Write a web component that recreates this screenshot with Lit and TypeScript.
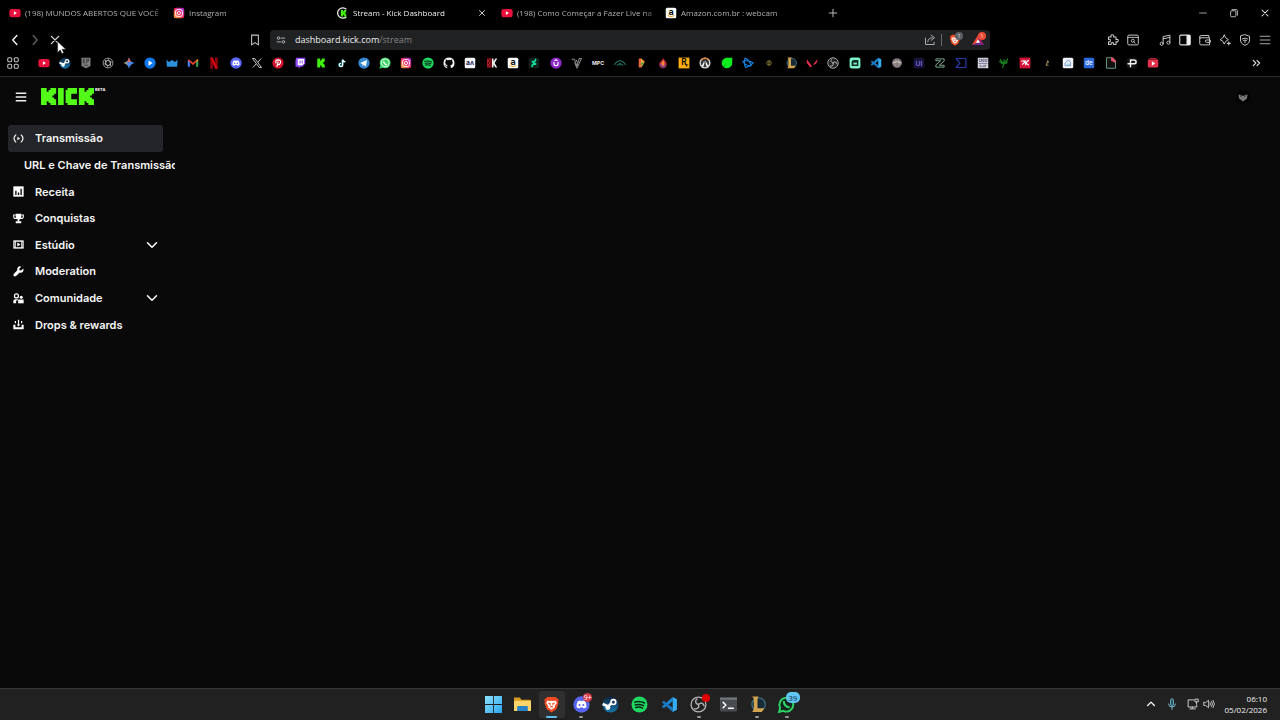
import { LitElement, html, svg, css, nothing } from "lit";
import { customElement, property } from "lit/decorators.js";

const badge = (bg: string, inner: unknown) => svg`<rect x="1" y="1" width="14" height="14" rx="2" fill=${bg}/>${inner}`;
const line = (d: string, color = "#c8c8c8", w = 1.3) =>
  svg`<path d=${d} fill="none" stroke=${color} stroke-width=${w} stroke-linecap="round" stroke-linejoin="round"/>`;
const fill = (d: string, color: string) => svg`<path d=${d} fill=${color}/>`;
const glyph = (t: string, color: string, size: number, y = 11) =>
  svg`<text x="8" y=${y} text-anchor="middle" font-size=${size} font-weight="700" font-family="Inter, sans-serif" fill=${color}>${t}</text>`;

const KICK_K = "M3 2h4v3h1v-1h1v-2h4v4h-1v1h-1v2h1v1h1v4h-4v-2h-1v-1h-1v3h-4z";
const DISCORD = "M3.6 4.6Q5.5 3.4 6.6 3.4l.5.8h1.8l.5-.8q1.100 0 3 1.200 1.700 3.200 1.300 6.500-1.500 1.200-3.200 1.500l-.8-1.300H6.300l-.8 1.300q-1.700-.3-3.200-1.500Q2 7.800 3.600 4.600z";

const ICONS: Record<string, unknown> = {
  youtube: svg`<rect x="0.500" y="2.500" width="15" height="11" rx="3" fill="#e8103c"/><path d="M6.500 5.500v5l4-2.500z" fill="#fff"/>`,
  steam: svg`<defs><linearGradient id="st" x2="0" y2="1"><stop offset="0" stop-color="#10233c"/><stop offset="1" stop-color="#1576ac"/></linearGradient></defs><circle cx="8" cy="8" r="7.500" fill="url(#st)"/><path d="M.6 7.500 6 9.800 8.600 7" stroke="#fff" stroke-width="2.400" fill="none"/><circle cx="10.700" cy="5.700" r="3" fill="#fff"/><circle cx="10.700" cy="5.700" r="1.500" fill="#29445f"/><circle cx="5.500" cy="10.800" r="2.300" fill="#fff"/>`,
  epic: svg`<path d="M2 1h12v11l-6 3-6-3z" fill="#808080"/><path d="M4.500 3h2.500M4.500 5.500h2M4.500 8h2.500M4.500 3v5M9 8.500V3h2.500v2.500H9M5 11h6" stroke="#2c2c2c" fill="none"/>`,
  gpt: svg`<g fill="none" stroke="#b8b8b8" stroke-width="1.100"><circle cx="8" cy="8" r="6.500"/><path d="M8 4.500 11 6.200v3.600L8 11.500 5 9.800V6.200zM8 4.500 13 7M11 6.200 11.500 12M11 9.800 6.500 13M8 11.500 3 9M5 9.800 4.500 4M5 6.200 9.500 3"/></g>`,
  gemini: svg`<defs><linearGradient id="gm" x2="1"><stop offset="0" stop-color="#e8c24a"/><stop offset=".45" stop-color="#4b86e8"/><stop offset="1" stop-color="#4b86e8"/></linearGradient></defs><path d="M8 0.500Q9.500 6.500 15.500 8 9.500 9.500 8 15.500 6.500 9.500 .5 8 6.500 6.500 8 .5z" fill="url(#gm)"/><path d="M8 .5Q9 5 11 6.500H5Q7 5 8 .5" fill="#e0665c"/>`,
  play: svg`<circle cx="8" cy="8" r="7.500" fill="#1078ec"/><path d="M6 4.500v7l5.500-3.500z" fill="#fff"/>`,
  crown: fill("M.5 3.500 4 6.500 8 4l4 2.500 3.500-3-.7 9.500H1.200z", "#2b8fdc"),
  gmail: svg`<path d="M1 13V4.500h2.800V13z" fill="#4285f4"/><path d="M12.200 13V4.500H15V13z" fill="#34a853"/><path d="M1 4.500 2.500 3 8 7.500 13.500 3 15 4.500 8 10.500z" fill="#ea4335"/><path d="m12.200 6.500 2.800-2-1-2z" fill="#fbbc04"/>`,
  netflix: svg`<path d="M3 .5h3.500v15H3zM9.500 .5H13v15H9.500z" fill="#8f050c"/><path d="M3 .5h3.500l6.500 15H9.500z" fill="#d40812"/>`,
  discord: svg`<circle cx="8" cy="8" r="7.700" fill="#5865f2"/><g transform="translate(1.400 1.500) scale(.82)">${fill(DISCORD, "#fff")}<circle cx="5.800" cy="8.500" r="1.200" fill="#5865f2"/><circle cx="10.200" cy="8.500" r="1.200" fill="#5865f2"/></g>`,
  x: svg`<path d="M2 2h3l9 12h-3zM13.500 2 9 7.200M7 9 2.500 14" fill="none" stroke="#d8d8d8" stroke-width="1.200"/>`,
  pinterest: svg`<circle cx="8" cy="8" r="7.500" fill="#d3122e"/><path d="M5.500 8.500Q3.800 4 8 3.800q4 .2 3.300 3.800-1 3.500-3.500 2M8.300 6 6.500 13" fill="none" stroke="#fff" stroke-width="1.600"/>`,
  twitch: svg`<path d="M3 1h12v8l-4 4H8.500L6 15.500V13H2V4z" fill="#9146ff"/><path d="M5 2.500h8.500v6L11 11H5z" fill="#fff"/><path d="M8 4.500v4M11 4.500v4" stroke="#9146ff" stroke-width="1.400"/>`,
  kick: fill(KICK_K, "#3ff00e"),
  tiktok: svg`<path d="M8.500 3.500v7a2.200 2.200 0 1 1-2.200-2.200M8.500 3.500q.5 2.500 3.500 3" fill="none" stroke="#35d7dc" stroke-width="2.200"/><path d="M9 3.500v7a2.200 2.200 0 1 1-2.200-2.200M9 3.500q.5 2.500 3.500 3" fill="none" stroke="#fff" stroke-width="1.600"/>`,
  telegram: svg`<circle cx="8" cy="8" r="7.500" fill="#3488d4"/><path d="m3 8 9-4-1.500 8.500-3-2-1.500 1.500V9.500z" fill="#fff"/>`,
  whatsapp: svg`<circle cx="8.200" cy="7.800" r="7.300" fill="#35d366"/><path d="m.5 15.500 1.300-5 3.400 3.700z" fill="#35d366"/><circle cx="8.200" cy="7.800" r="5.300" fill="none" stroke="#e4ffe9" stroke-width="1.300"/><path d="M6 5.500q.5 4 4.500 5" stroke="#e4ffe9" stroke-width="1.800" fill="none"/>`,
  instagram: svg`<defs><linearGradient id="ig" x1="0" y1="1" x2="1" y2="0"><stop offset="0" stop-color="#ffb52e"/><stop offset=".5" stop-color="#ee2a63"/><stop offset="1" stop-color="#9a2be0"/></linearGradient></defs><rect x="1" y="1" width="14" height="14" rx="3" fill="url(#ig)"/><rect x="3.500" y="3.500" width="9" height="9" rx="2.600" fill="none" stroke="#fff" stroke-width="1.300"/><circle cx="8" cy="8" r="2.100" fill="none" stroke="#fff" stroke-width="1.200"/>`,
  spotify: svg`<circle cx="8" cy="8" r="7.500" fill="#1ed760"/><path d="M3.500 5.800q5-1.500 9.200.8M4 8.400q4.300-1.200 7.800.7M4.500 10.800q3.700-1 6.400.6" fill="none" stroke="#0b2412" stroke-width="1.400" stroke-linecap="round"/>`,
  github: fill("M8 .7a7.400 7.400 0 0 0-2.400 14.400V12.800q-2 .5-2.600-1-.4-.8-1-1.200 1-.3 1.600.7.800 1.100 2.100.6 0-.6.500-1Q3 10.600 3 7.500q0-1.200.8-2-.3-1 .1-2.100 1 0 2.200.9 1.900-.5 3.800 0 1.200-.9 2.200-.9.4 1.100.1 2.100.8.800.8 2 0 3.100-3.200 3.500.6.500.6 1.500v2.600A7.400 7.400 0 0 0 8 .7z", "#f0f0f0"),
  an: badge("#f4f4fa", svg`${glyph("aʌ", "#252c5c", 9)}`),
  redk: svg`<path d="M1.500 2h6v12h-6z" fill="#c01828"/><path d="M3 3l4 5-4 5M7 3 3 8l4 5" stroke="#2a0608" fill="none"/><path d="M8 2h2v4l2.500-4H15l-3.500 6 3.500 6h-2.500L10 10v4H8z" fill="#eee"/>`,
  amazon: badge("#fff", svg`${glyph("a", "#111", 12, 10)}<path d="M3.500 11.500q4.500 2.500 9 0" stroke="#f2a01c" stroke-width="1.300" fill="none"/>`),
  deviant: badge("#12211d", fill("M11 2v3L8.800 8H11v2.500H7.500L6 13.500H4.500v-3L7 7.500H5V5h3.200L9.800 2z", "#12dc9a")),
  udemy: svg`<circle cx="8" cy="8" r="7.500" fill="#8c28c8"/><path d="M5.300 6.500V9q0 2.600 2.700 2.600T10.700 9V6.500M6 5l2-1.500L10 5" fill="none" stroke="#fff" stroke-width="1.500"/>`,
  vee: line("M1.500 3h3L8 12l3-10h3L8 15 5 8M7 4l1.500 3", "#c0c0c0", 1),
  mpc: glyph("MPC", "#e8e8e8", 7, 10.5),
  eye: line("M1 10Q4 5 8 5t7 5M4 11q4-4 8 0M8 8v3", "#287a68", 1.4),
  flag: svg`<path d="M5 2h4v12H5z" fill="#e8683a"/><path d="M8 2l5 4-3 6-2 1z" fill="#eda43a"/><path d="M8 7l4 1-4 4z" fill="#53a845"/>`,
  flame: svg`<path d="M8 1q1 3 3 4 3 4 1 8-4 4-8 0-3-5 2-8 2-2 2-4z" fill="#c5313b"/><path d="M4 10q0 3 4 4.500Q12 13 11.500 9L9 11 7 8z" fill="#7c3a98"/><path d="M8 4q3 4 1 8-3 0-3-3z" fill="#f28c38"/>`,
  rockstar: svg`<rect x=".8" y=".8" width="14.400" height="14.400" fill="#fcae12"/>${glyph("R", "#141005", 11, 11)}<path d="M9 10h5l-3.500 3 .5-4 1.500 4z" fill="#141005"/>`,
  overwatch: svg`<circle cx="8" cy="8" r="6.500" fill="#3a3a3a" stroke="#d8d8d8" stroke-width="1.800"/><path d="M3.200 3.500Q8-.5 12.800 3.500" stroke="#e87b24" stroke-width="1.800" fill="none"/><path d="m3.500 12 3.700-7v4L5.500 13.500zM12.500 12 8.800 5v4l1.700 4.500z" fill="#f4f4f4"/>`,
  leaf: svg`<path d="M7 1h8v7a7 7 0 1 1-8-7z" fill="#0cef1c"/><path d="M2 14l4-4" stroke="#07961a" stroke-width="1"/>`,
  battle: line("M4 1.500c-1 3-1 9 1 12.500 5-2 7-3 10-6C12 5.500 5 4 1 6c3 4 7 6 11 6M4 1.500C8 3 11 7 12 12", "#1583e4", 1.5),
  gold: svg`<circle cx="8" cy="8" r="3" fill="none" stroke="#8a7a33" stroke-width="1.200"/><path d="M8 5v6" stroke="#c8b454"/>`,
  league: svg`<circle cx="9" cy="8" r="6.300" fill="#172a35" stroke="#3b6f80" stroke-width="1.200"/><path d="M3 .5h6L8 2.500v9h6.500L12 15H3l1.500-2.500v-10z" fill="#d4a551"/>`,
  valorant: svg`<path d="M1 3 8.500 13H5L1 7.500z" fill="#e9304e"/><path d="m15 3-5.500 7H12l3-3.500z" fill="#e9304e"/>`,
  obs: svg`<circle cx="8" cy="8" r="7" fill="#222" stroke="#b4b4b4" stroke-width="1.200"/><g fill="none" stroke="#b4b4b4" stroke-width="1.300" stroke-linecap="round"><path d="M8 8C5 7.500 4.500 4.500 6.500 2.800"/><path d="M8 8C5 7.500 4.500 4.500 6.500 2.800" transform="rotate(120 8 8)"/><path d="M8 8C5 7.500 4.500 4.500 6.500 2.800" transform="rotate(240 8 8)"/></g>`,
  robot: svg`<rect x=".8" y=".8" width="14.400" height="14.400" rx="3" fill="#7df4cb"/><path d="M3.500 12V7Q3.500 4 7 4h5.500v8z" fill="#0e2c22"/><path d="M6 7.500h4.500V10H6z" fill="#7df4cb"/>`,
  vscode: svg`<path d="M11 1 1 9.800l1.500 1.700L11 5z" fill="#1b86d3"/><path d="M11 15 1 6.200l1.500-1.700L11 11z" fill="#1878c0"/><path d="m11 1 4 2v10l-4 2z" fill="#35adf2"/>`,
  mask: svg`<circle cx="8" cy="8" r="6.500" fill="#6f6880"/><path d="M4 5v6M6.500 2.500v11M9.500 2.500v11M12 5v6" stroke="#cbb577" stroke-width="1"/><path d="M2 8q6-4 12 0" stroke="#e4e0ec" fill="none"/>`,
  ui: badge("#18123c", svg`${glyph("UI", "#7263c9", 9, 11.5)}`),
  zed: svg`<path d="M2.500 2.500h11v3L7 11h6.500v2.500h-11v-3L9 5H2.500z" fill="none" stroke="#82b597" stroke-width="1.200"/>`,
  sigma: line("M1.500 2h13v12h-13l5-6z", "#2437a5", 1.6),
  doc: svg`<rect x="1" y="1" width="14" height="14" fill="#dcdce4"/><path d="M3 3h3v3H3zM7.500 3h2v3h-2zM11 3h2.500v3H11zM2 8.500h12M3 11h3M8 11h5M3 13h9" fill="none" stroke="#5a5a78"/>`,
  razer: line("M3 3q1 4 5 5 4-1 5-6M8 3v6l-2 5M4 8l4 1 4-1M2 6l4 2M10 5l2 2", "#16811b", 1.5),
  redsk: svg`<rect x=".8" y=".8" width="14.400" height="14.400" fill="#d41338"/><path d="M3 6q3-2 4 0t-3 4M8 4l1 7M13 4 9 8l4 3" stroke="#fff" stroke-width="1.500" fill="none"/>`,
  ember: line("M7 11 9 5M7.500 11h2M9 5l1 2", "#9a8a58", 1.4),
  cloud: badge("#f0f4fa", svg`<path d="M4 11.500Q2.500 8 5.500 7q1-4 4.500-2 2 2 1.500 6.500z" fill="none" stroke="#7193d1" stroke-width="1.200"/><path d="M6 9.500h5" stroke="#66c0b8"/>`),
  de: badge("#2c67dc", svg`${glyph("de", "#dbe8ff", 8, 11)}`),
  page: svg`<path d="M2 1h8l4 4v10H2z" fill="#111" stroke="#6fa58a" stroke-width="1.200"/><path d="M8 1h3l3 4v3L8 5z" fill="#e94d68"/>`,
  pee: svg`<rect x="1" y="1" width="14" height="14" rx="2" fill="#111"/><path d="M6 13.500V4h4q3.500 0 3.500 2.500T10 9H2" stroke="#f3f3f3" stroke-width="2" fill="none"/>`,
  redtv: svg`<rect x="1" y="3" width="14" height="11" rx="2" fill="#e2314c"/><path d="M4 3V2h8v1" stroke="#e2314c"/><path d="M6.500 5.500v6l4.500-3z" fill="#fff"/>`,

  kickring: svg`<path d="M12.500 13A6.900 6.900 0 1 1 12.500 3" fill="none" stroke="#f1fff1" stroke-width="1.600"/><g transform="translate(3 2.500) scale(.72)">${fill(KICK_K, "#3ff00e")}</g>`,
  close: line("M4 4l8 8M12 4l-8 8", "#e8e8e8", 1.4),
  stop: line("M3 3l10 10M13 3 3 13", "#d4d4d4", 1.5),
  plus: line("M8 3v10M3 8h10", "#bdbdbd", 1.3),
  min: line("M3.500 8h9", "#b0b0b0", 1.2),
  restore: svg`<rect x="3.500" y="5" width="7" height="8" rx="1.500" fill="none" stroke="#ccc" stroke-width="1.200"/>${line("M5.500 3.500h5.500q1.500 0 1.500 1.500v6", "#ccc", 1.2)}`,
  back: line("M10.500 2 5 8l5.500 6", "#fff", 1.7),
  forward: line("M5.500 2 11 8l-5.500 6", "#686868", 1.5),
  bookmark: line("M3.500 1.500h9v13L8 11.500l-4.500 3z", "#c8c8c8", 1.4),
  tune: svg`<circle cx="4" cy="5" r="2" fill="none" stroke="#ccc" stroke-width="1.300"/><circle cx="12" cy="11" r="2" fill="none" stroke="#ccc" stroke-width="1.300"/>${line("M8 5h6M2 11h6", "#ccc", 1.3)}`,
  share: line("M2 5.500V14h11.500v-3M5 10.500Q5.500 5 11 5M9.500 1.500 14 5l-4.500 3.500", "#b0b0b0", 1.3),
  brave: svg`<path d="M4 1h8l1.500 1.700 1.300.3-.5 2 .2 2-2 5.500L8 15.500 3.500 12.500 1.500 7l.2-2-.5-2 1.300-.3z" fill="#f04b23"/><path d="M4 4.500l2.500.3L8 4.500l1.500.3 2.500-.3 1 2-2 3 .3 1L8 13l-3.300-2.500.3-1-2-3z" fill="#fff"/><path d="M4.800 6.500l2 .6-.4 1.800M11.200 6.500l-2 .6.4 1.800M6.500 10.500 8 9.700l1.500.8" stroke="#f04b23" fill="none"/>`,
  bat: svg`<path d="M8 1.500 0 14.500h16z" fill="#662d91"/><path d="M8 1.500 0 14.500l8-4z" fill="#f04722"/><path d="M8 1.500v9l8 4z" fill="#9e1f63"/><path d="M8 7l-2.800 4.500h5.600z" fill="#fff"/>`,
  puzzle: line("M2 4h3.500Q4.500 1 7 1t1.800 3H12v3.500q3-1 3 1.300t-3 1.500V14H8.800q.7-2.500-1.600-2.500T5.500 14H2v-3.500q2.500.5 2.500-1.700T2 7.200z", "#c8c8c8", 1.4),
  search: svg`<rect x="1" y="1.500" width="14" height="13" rx="1.500" fill="none" stroke="#c8c8c8" stroke-width="1.300"/><circle cx="7.700" cy="9" r="2" fill="none" stroke="#c8c8c8" stroke-width="1.200"/>${line("M1 4.500h14M9.300 10.500l1.700 1.700", "#c8c8c8", 1.2)}`,
  music: svg`<circle cx="3.500" cy="13" r="2" fill="none" stroke="#c8c8c8" stroke-width="1.300"/><circle cx="12.500" cy="11.500" r="2" fill="none" stroke="#c8c8c8" stroke-width="1.300"/>${line("M5.500 13V3.500l9-2v10M5.500 6.500l9-2")}`,
  panel: svg`<rect x="1" y="1.500" width="14" height="13" rx="1.500" fill="none" stroke="#ddd" stroke-width="1.400"/><path d="M10 1.500h5v13h-5z" fill="#eee"/>`,
  wallet: line("M13 4.500V2H3Q1 2 1 4t1 2M1 4v9q0 1.500 1.500 1.500H14V5H3M14.500 8H10q-1.500 0-1.500 1.500T10 11.200h4.500z"),
  sparkle: svg`${line("M7 1.500Q8 6 12.500 7.500 8 9 7 13.500 6 9 1.500 7.500 6 6 7 1.500z")}<path d="M13 10v5M10.500 12.500h5" stroke="#c8c8c8" stroke-width="1.500"/>`,
  shield: line("M8 1l6 2v5q0 5-6 7-6-2-6-7V3zM4.500 6.500Q8 4 11.500 6.500M6 8.500q2-1.200 4 0M8 9v2.500", "#c8c8c8", 1.3),
  menu: svg`<path d="M1 3h14M1 8h14M1 13h14" stroke="#a8a8a8" stroke-width="1.500"/>`,
  apps: svg`<g fill="none" stroke="#c4c4c4" stroke-width="1.400"><rect x="1" y="1" width="5.300" height="5.300" rx="1.500"/><rect x="9.700" y="1" width="5.300" height="5.300" rx="1.500"/><rect x="1" y="9.700" width="5.300" height="5.300" rx="1.500"/><rect x="9.700" y="9.700" width="5.300" height="5.300" rx="1.500"/></g>`,
  more: line("M3 4.500 6.500 8 3 11.500M8 4.500 11.500 8 8 11.500", "#ddd", 1.5),
  pointer: svg`<path d="M2 .5v13.500l3.200-3 2 4.500 2.300-1-2-4.300H12z" fill="#fff" stroke="#222" stroke-width=".7"/>`,

  burger: svg`<path d="M1 3h14M1 8h14M1 13h14" stroke="#f0f0f0" stroke-width="1.800"/>`,
  live: svg`${line("M4 3Q-1 8 4 13M12 3q5 5 0 10", "#eee", 1.8)}<path d="M6.300 5.300v5.400L10.500 8z" fill="#eee"/>`,
  chart: svg`<path d="M.5.5h15v15H.5z" fill="#fff"/><path d="M4.200 7v6M8 9.500V13M11.800 4v9" stroke="#0a0a0a" stroke-width="2"/>`,
  trophy: svg`<path d="M4 1h8v5q0 3-2.800 3.600V12H12v3H4v-3h2.800V9.600Q4 9 4 6z" fill="#fff"/><path d="M4 3H1v2q0 3 3.500 3M12 3h3v2q0 3-3.500 3" fill="none" stroke="#fff" stroke-width="1.500"/>`,
  studio: svg`<path d="M.5 2h15v12H.5z" fill="#fff"/><path d="M4 4h8v8H4z" fill="#0a0a0a"/><path d="M6.300 5v6L11 8z" fill="#fff"/><path d="M2.300 4v8M13.700 4v8" stroke="#555" stroke-width=".8"/>`,
  wrench: fill("M15 3.500 11.800 6.700 9.500 6.200 9 4l3-3Q9-.3 7 2 5.500 3.800 6.300 6.300L1 11.500q-1 1.700.3 3.200 1.500 1.100 3.200 0L9.800 9.500q2.800.8 4.500-1Q16 6.500 15 3.500z", "#fff"),
  community: svg`<circle cx="5" cy="4.200" r="2.900" fill="none" stroke="#fff" stroke-width="1.800"/><path d="M.5 15v-3.200Q.5 9 3.300 9H7v2H4.500v4z" fill="#fff"/><circle cx="12" cy="6.300" r="2.200" fill="#fff"/><path d="M7.500 9.500h8V15h-8z" fill="#fff"/>`,
  drops: svg`<path d="M.5 8.500h3V12h9V8.500h3V15H.5z" fill="#fff"/><path d="M8 1v8M3.500 3v3M12.500 3v3" stroke="#fff" stroke-width="1.800"/><path d="M5.500 8h5L8 10.800z" fill="#fff"/>`,
  chevron: line("M2 5l6 6 6-6", "#fff", 2),

  windows: svg`<defs><linearGradient id="wn" x2="1" y2="1"><stop offset="0" stop-color="#8de2ff"/><stop offset="1" stop-color="#2ba7ee"/></linearGradient></defs><path d="M0 0h7.600v7.600H0zM8.400 0H16v7.600H8.400zM0 8.400h7.600V16H0zM8.400 8.400H16V16H8.400z" fill="url(#wn)"/>`,
  folder: svg`<path d="M0 1.500h5.500l1.500 2h8.500V14H0z" fill="#d99a21"/><path d="M0 4.500h16V14H0z" fill="#fcd468"/><path d="M3 14v-3.500Q3 9.500 4 9.500h8q1 0 1 1V14z" fill="#2782c8"/>`,
  terminal: svg`<rect y="1.500" width="16" height="13" rx="1" fill="#484c50"/><path d="M0 1.500h16v2H0z" fill="#73787d"/>${line("M3 6l2.500 2.500L3 11M8 11.500h4.500", "#fff", 1.4)}`,
  wapp: svg`<path d="M1 15l1-4a6.500 6.500 0 1 1 3 3z" fill="#16251b" stroke="#2bd465" stroke-width="1.800"/><path d="M5.500 4.800q0 5.500 5.500 6" fill="none" stroke="#2bd465" stroke-width="2"/>`,
  up: line("M3.500 10 8 5.500l4.500 4.500", "#fff", 1.7),
  mic: svg`<rect x="6" y="1" width="4" height="9" rx="2" fill="#2b5261" stroke="#7cc8dc"/>${line("M3.500 8q0 4 4.500 4t4.500-4M8 12v3", "#8ecfe0", 1.2)}`,
  network: svg`${line("M9 2.500H1.500v9.500H13v-2M4 14.500h7M7 12v2", "#cfcfcf", 1.3)}<path d="M10.500 1.500h4.500V5h-4.500zM12.700 5v4" fill="none" stroke="#cfcfcf" stroke-width="1.300"/>`,
  volume: line("M1 6v4h2.500L7.500 13V3L3.500 6zM9.500 6q1.300 2 0 4M11.500 4.500q2.500 3.500 0 7M13.500 3q3.500 5 0 10", "#cfcfcf", 1.2),
};

@customElement("ui-icon")
export class UiIcon extends LitElement {
  @property() name = "";
  static styles = css`
    :host { display: inline-flex; flex: none; width: 12px; height: 12px; }
    svg { width: 100%; height: 100%; display: block; overflow: visible; }
  `;
  render() {
    return html`<svg viewBox="0 0 16 16" aria-hidden="true">${ICONS[this.name] ?? nothing}</svg>`;
  }
}

const TABS = [
  { icon: "youtube", title: "(198) MUNDOS ABERTOS QUE VOCÊ", active: false },
  { icon: "instagram", title: "Instagram", active: false },
  { icon: "kickring", title: "Stream - Kick Dashboard", active: true },
  { icon: "youtube", title: "(198) Como Começar a Fazer Live na", active: false },
  { icon: "amazon", title: "Amazon.com.br : webcam", active: false },
];

const BOOKMARKS = (
  "youtube steam epic gpt gemini play crown gmail netflix discord x pinterest twitch kick tiktok telegram whatsapp instagram " +
  "spotify github an redk amazon deviant udemy vee mpc eye flag flame rockstar overwatch leaf battle gold league valorant obs " +
  "robot vscode mask ui zed sigma doc razer redsk ember cloud de page pee redtv"
).split(" ");

const NAV = [
  { icon: "live", label: "Transmissão", active: true },
  { label: "URL e Chave de Transmissão", sub: true },
  { icon: "chart", label: "Receita" },
  { icon: "trophy", label: "Conquistas" },
  { icon: "studio", label: "Estúdio", more: true },
  { icon: "wrench", label: "Moderation" },
  { icon: "community", label: "Comunidade", more: true },
  { icon: "drops", label: "Drops & rewards" },
] as { icon?: string; label: string; active?: boolean; sub?: boolean; more?: boolean }[];

const TASKS = [
  { icon: "windows", label: "Iniciar" },
  { icon: "folder", label: "Explorador" },
  { icon: "brave", label: "Brave", active: true },
  { icon: "discord", label: "Discord", run: true, count: "9+", tone: "red" },
  { icon: "steam", label: "Steam" },
  { icon: "spotify", label: "Spotify" },
  { icon: "vscode", label: "VS Code" },
  { icon: "obs", label: "OBS", run: true, count: " ", tone: "dot" },
  { icon: "terminal", label: "Terminal" },
  { icon: "league", label: "League", run: true },
  { icon: "wapp", label: "WhatsApp", run: true, count: "39", tone: "blue" },
] as { icon: string; label: string; active?: boolean; run?: boolean; count?: string; tone?: string }[];

@customElement("app-root")
export class AppRoot extends LitElement {
  static styles = css`
    :host {
      display: flex; flex-direction: column; height: 100vh; overflow: hidden;
      background: #090909; color: #fff; font-family: "Open Sans", sans-serif; font-size: 8px;
    }
    * { box-sizing: border-box; }
    button {
      display: inline-flex; align-items: center; justify-content: center; flex: none;
      padding: 0; border: 0; background: none; color: inherit; font: inherit; position: relative;
    }
    a { color: inherit; text-decoration: none; }
    .chrome { background: #000; border-bottom: 1px solid #2b2b2b; flex: none; }
    .tabs { display: flex; align-items: center; height: 27px; padding: 0 0 1px 5px; }
    .tab { display: flex; align-items: center; width: 164px; height: 26px; padding: 0 1px 0 4px; color: #b0b0b0; }
    .tab.active { color: #ececec; padding-right: 10px; }
    .tab .link { flex: 1; min-width: 0; display: flex; align-items: center; gap: 4px; }
    .title { flex: 1; white-space: nowrap; overflow: hidden; line-height: 14px; mask-image: linear-gradient(90deg, #000 88%, transparent); }
    .new { width: 16px; }
    .window { display: flex; margin-left: auto; }
    .window button { width: 31px; height: 26px; }
    .s10 { width: 10px; height: 10px; }
    .bar { display: grid; grid-template-columns: 270px minmax(0, 1fr) 290px; align-items: center; height: 26px; }
    .group { display: flex; align-items: center; padding: 0 5px; }
    .group button { width: 20px; height: 20px; }
    .group .push { margin-left: auto; }
    .tools { justify-content: flex-end; }
    .tools .apart { margin-left: 12px; }
    .cursor { position: absolute; left: 11px; top: 11px; width: 13px; height: 13px; z-index: 1; }
    .url { display: flex; align-items: center; gap: 5px; height: 20px; padding: 0 6px; border-radius: 4px; background: #202122; }
    .address { position: relative; flex: 1; display: flex; height: 18px; align-items: center; margin-left: 4px; font-size: 9px; color: #f0f0f0; }
    .address input { width: 100%; padding: 0; border: 0; outline: 0; background: none; color: transparent; font: inherit; }
    .address span { position: absolute; inset: 0; line-height: 18px; pointer-events: none; }
    .address i { font-style: normal; color: #858585; }
    .url .rule { width: 1px; height: 12px; background: #6a6a6a; }
    .url .shields { gap: 11px; display: flex; margin-left: 2px; }
    .mini { position: absolute; right: -2px; top: -2px; width: 8px; height: 8px; border-radius: 4px; background: #5c6167; font-size: 6px; line-height: 8px; color: #ddd; text-align: center; }
    .mini.hot { background: #ec4a34; }
    .marks { display: flex; align-items: center; height: 23px; padding: 0 13px 3px 3px; }
    .marks > button { width: 20px; height: 20px; }
    .list { flex: 1; display: grid; grid-template-columns: repeat(53, minmax(0, 1fr)); margin: 0 83px 0 10px; }
    .list a { display: flex; justify-content: center; }

    .page { flex: 1; min-height: 0; font-family: Inter, sans-serif; }
    header { display: flex; align-items: center; height: 39px; padding: 0 29px 0 15px; gap: 14px; }
    .brand { display: flex; align-items: flex-start; gap: 1px; font-size: 4px; font-weight: 700; line-height: 4px; }
    .brand svg { width: 53px; height: 17px; }
    .avatar { width: 16px; height: 16px; margin-left: auto; }
    .avatar svg { width: 16px; height: 16px; }
    nav { display: grid; grid-template-rows: repeat(8, 1fr); width: 175px; height: 213px; margin-top: 9px; padding-left: 8px; overflow: hidden; }
    .item { display: flex; align-items: center; gap: 11px; width: 155px; padding: 0 5px; border-radius: 3px; font-size: 11px; font-weight: 600; line-height: 16px; white-space: nowrap; color: #f6f6f6; }
    .item.active { background: #232528; }
    .item.sub { padding-left: 16px; }
    .item .push { margin-left: auto; }
    .item .s11 { width: 11px; height: 11px; }

    footer { display: grid; grid-template-columns: 1fr auto 1fr; align-items: center; flex: none; height: 32px; padding-bottom: 1px; background: #212121; border-top: 1px solid #383838; }
    .tasks { grid-column: 2; display: grid; grid-template-columns: repeat(11, 1fr); width: 323px; justify-items: center; }
    .task { width: 26px; height: 27px; border-radius: 3px; }
    .task.active { background: #303030; }
    .task ui-icon { width: 17px; height: 17px; }
    .task.run::after, .task.active::after { content: ""; position: absolute; bottom: 0; width: 4px; height: 2px; border-radius: 1px; background: #999; }
    .task.active::after { width: 11px; background: #5fbdf0; }
    .count { position: absolute; right: 2px; top: 2px; min-width: 9px; height: 9px; border-radius: 5px; font-size: 7px; line-height: 9px; text-align: center; }
    .count.red { background: #d33b49; }
    .count.dot { background: #e00000; width: 8px; min-width: 8px; height: 8px; top: 3px; }
    .count.blue { background: #61c6f4; color: #10303f; width: 14px; height: 11px; font-size: 8px; line-height: 11px; right: 0; top: 1px; }
    .tray { display: flex; align-items: center; justify-content: flex-end; padding-right: 13px; color: #f0f0f0; }
    .tray button { width: 16px; height: 20px; }
    .tray .wide { margin-right: 5px; }
    .clock { margin-left: 8px; text-align: right; line-height: 11px; }
  `;

  private btn(label: string, icon: string, cls = "", extra: unknown = nothing) {
    return html`<button class=${cls} aria-label=${label}><ui-icon name=${icon}></ui-icon>${extra}</button>`;
  }

  render() {
    return html`
      <div class="chrome">
        <div class="tabs">
          ${TABS.map(
            (t) => html`<div class="tab ${t.active ? "active" : ""}">
              <a class="link" href="#"><ui-icon name=${t.icon}></ui-icon><span class="title">${t.title}</span></a>
              ${t.active ? html`<button aria-label="Fechar guia"><ui-icon class="s10" name="close"></ui-icon></button>` : nothing}
            </div>`,
          )}
          ${this.btn("Nova guia", "plus", "new")}
          <div class="window">
            ${this.btn("Minimizar", "min")}${this.btn("Restaurar", "restore")}${this.btn("Fechar", "close")}
          </div>
        </div>
        <div class="bar">
          <div class="group">
            ${this.btn("Voltar", "back")}${this.btn("Avançar", "forward")}
            ${this.btn("Parar", "stop", "", html`<ui-icon class="cursor" name="pointer"></ui-icon>`)}
            ${this.btn("Favoritar", "bookmark", "push")}
          </div>
          <div class="url">
            <ui-icon class="s10" name="tune"></ui-icon>
            <label class="address">
              <input aria-label="Endereço" />
              <span>dashboard.kick.com<i>/stream</i></span>
            </label>
            ${this.btn("Compartilhar", "share")}
            <div class="rule"></div>
            <div class="shields">
              ${this.btn("Shields", "brave", "", html`<span class="mini">1</span>`)}
              ${this.btn("Rewards", "bat", "", html`<span class="mini hot">1</span>`)}
            </div>
          </div>
          <div class="group tools">
            ${this.btn("Extensões", "puzzle")}${this.btn("Pesquisar guias", "search")}
            ${this.btn("Mídia", "music", "apart")}${this.btn("Painel", "panel")}${this.btn("Carteira", "wallet")}
            ${this.btn("Leo", "sparkle")}${this.btn("VPN", "shield")}${this.btn("Menu", "menu")}
          </div>
        </div>
        <div class="marks">
          ${this.btn("Aplicativos", "apps")}
          <div class="list">
            ${BOOKMARKS.map((b) => html`<a href="#" aria-label=${b}><ui-icon name=${b}></ui-icon></a>`)}
          </div>
          ${this.btn("Mais favoritos", "more")}
        </div>
      </div>

      <div class="page">
        <header>
          ${this.btn("Menu lateral", "burger")}
          <a class="brand" href="#" aria-label="Kick beta">
            <svg viewBox="0 0 28 9" preserveAspectRatio="none" fill="#53fc18">
              <path d="M0 0h3v2h1v-1h1v-1h3v3h-1v1h-1v1h1v1h1v3h-3v-1h-1v-1h-1v2h-3z" />
              <path d="M9 0h3v9h-3z" />
              <path d="M14 0h5v3h-3v3h3v3h-5v-1h-1v-7h1z" />
              <path d="M20 0h3v2h1v-1h1v-1h3v3h-1v1h-1v1h1v1h1v3h-3v-1h-1v-1h-1v2h-3z" />
            </svg>
            <span>BETA</span>
          </a>
          <button class="avatar" aria-label="Perfil">
            <svg viewBox="0 0 16 16"><circle cx="8" cy="8" r="7" fill="#030303" /><path d="M3.500 5.500 6 6l2 1 2-1 2.500-.5-.5 4L8 12.500 4 9.500z" fill="#777" /><path d="M5 7h2M9 7h2" stroke="#333" /></svg>
          </button>
        </header>
        <nav>
          ${NAV.map(
            (n) => html`<a href="#" class="item ${n.active ? "active" : ""} ${n.sub ? "sub" : ""}">
              ${n.icon ? html`<ui-icon class="s11" name=${n.icon}></ui-icon>` : nothing}<span>${n.label}</span>
              ${n.more ? html`<ui-icon class="push" name="chevron"></ui-icon>` : nothing}
            </a>`,
          )}
        </nav>
      </div>

      <footer>
        <div class="tasks">
          ${TASKS.map((t) =>
            this.btn(
              t.label,
              t.icon,
              `task ${t.active ? "active" : ""} ${t.run ? "run" : ""}`,
              t.count ? html`<span class="count ${t.tone}">${t.count}</span>` : nothing,
            ),
          )}
        </div>
        <div class="tray">
          ${this.btn("Ícones ocultos", "up", "wide")}${this.btn("Microfone", "mic", "wide")}
          ${this.btn("Rede", "network")}${this.btn("Volume", "volume")}
          <div class="clock">06:10<br />05/02/2026</div>
        </div>
      </footer>
    `;
  }
}
